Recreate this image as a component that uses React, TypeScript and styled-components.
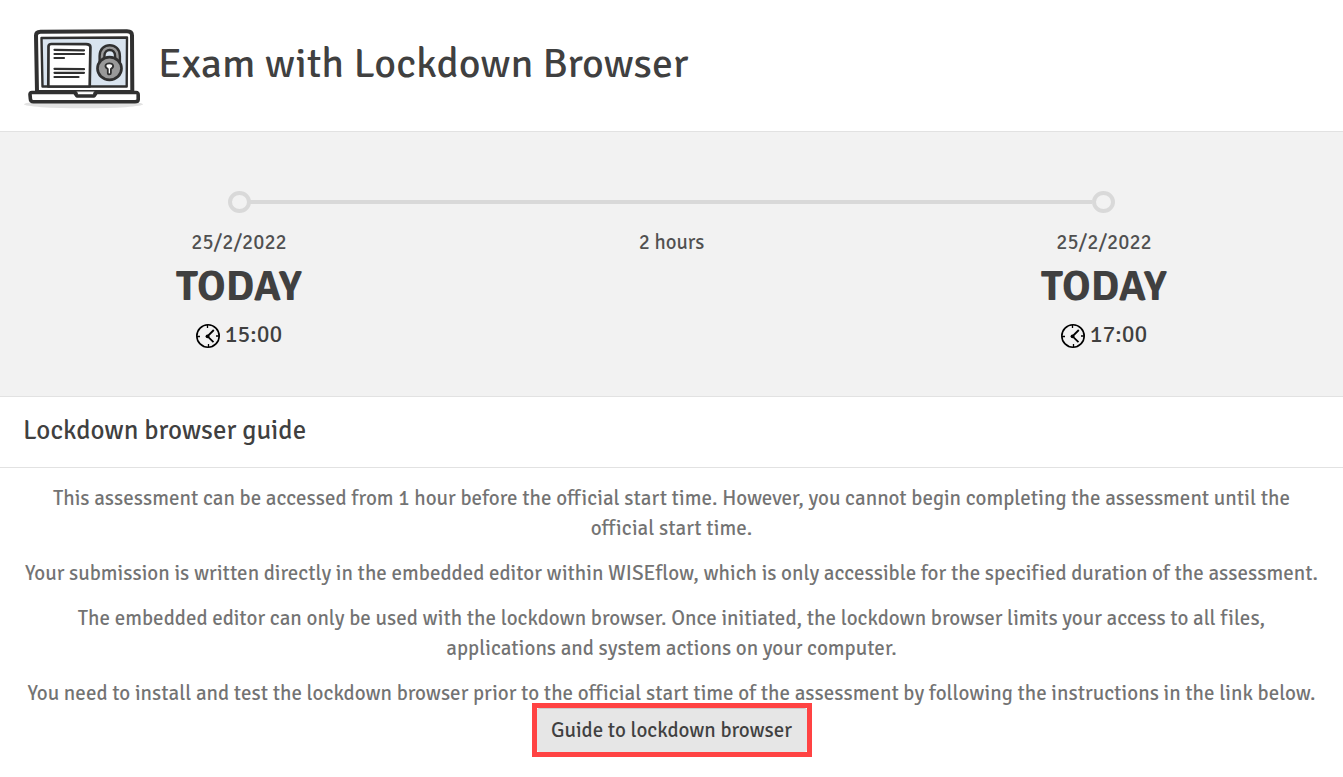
import styled, { createGlobalStyle } from 'styled-components';

interface MilestoneProps {
    date: string;
    label: string;
    time: string;
    end?: boolean;
}

const LaptopIcon = () => (
    <svg width="120" height="84" viewBox="0 0 120 84" fill="none" strokeLinejoin="round" strokeLinecap="round">
        <ellipse cx="60.5" cy="77.3" rx="59.5" ry="4" fill="#e2e2e2"/>
        <path d="M14 65 13 8.5Q13 5 17.5 4.8L104 4.2Q109 4.2 109 8.5L109.3 65Z" fill="#fff" stroke="#303030" strokeWidth="4"/>
        <path d="M18.5 11 104 10.5 103.7 59.5H19.5Z" fill="#d9e4ef" stroke="#303030" strokeWidth="2.4"/>
        <path d="M25.3 59.5 25.5 19.5Q25.5 17 28.5 17L63 17.2Q67.3 17.2 67.4 20L66.7 59.5Z" fill="#fff" stroke="#303030" strokeWidth="2.7"/>
        <path d="M31.5 22.8 61 23.3M31.5 27H61M31.5 31H41M31.5 41.8 61 42.2M31.5 45.8H61M31.5 50H55.5" stroke="#303030" strokeWidth="2.2"/>
        <path d="M79 35V29C79 17.8 94.5 17.8 94.5 29V35" stroke="#303030" strokeWidth="7.2" strokeLinecap="butt"/>
        <path d="M79 35V29C79 17.8 94.5 17.8 94.5 29V35" stroke="#999" strokeWidth="2.4" strokeLinecap="butt"/>
        <ellipse cx="86.5" cy="41.5" rx="12" ry="11.3" fill="#999" stroke="#303030" strokeWidth="2.7"/>
        <path d="M84.8 42C80.7 39.5 82.5 36.3 86.3 36.3C90 36.3 92 39.5 87.9 42V46Q87.900 47.3 86.3 47.3T84.8 46Z" fill="#fff" stroke="#303030" strokeWidth="1.8"/>
        <path d="M9 65.5H51.5L54 69H71L73.5 65.5H113Q115.3 65.5 115.2 68V72.5Q115 74.7 112 74.7H10.5Q7.5 74.7 7.4 72L7 67.5Q7 65.5 9 65.5Z" fill="#fff" stroke="#303030" strokeWidth="3.6"/>
        <path d="M54 64H71L70 67H55Z" fill="#fff"/>
        <path d="M54 64.6H71" stroke="#777" strokeWidth="1"/>
    </svg>
);

const ClockIcon = () => (
    <svg width="24" height="24" viewBox="0 0 24 24" fill="none" stroke="#000">
        <circle cx="12" cy="12" r="11.2" strokeWidth="1.6"/>
        <path d="M11.5 1V4M12.5 20V23M1 12.5H4M20 12H23" strokeWidth="1.3"/>
        <path d="M17.8 6 11.5 12.3 17.5 18.2" strokeWidth="1.8"/>
        <circle cx="11.5" cy="12.3" r="1.9" fill="#000" stroke="none"/>
    </svg>
);

const Milestone = ({date, label, time, end}: MilestoneProps) => (
    <Column>
        <Marker $end={end}/>
        <DateText>{date}</DateText>
        <DayLabel>{label}</DayLabel>
        <TimeRow>
            <ClockIcon/>
            <TimeText>{time}</TimeText>
        </TimeRow>
    </Column>
);

const App = () => (
    <>
        <GlobalStyle/>
        <Header>
            <LaptopIcon/>
            <Title>Exam with Lockdown Browser</Title>
        </Header>
        <Timeline>
            <Milestone date="25/2/2022" label="TODAY" time="15:00"/>
            <Duration>
                <Track/>
                <DateText>2 hours</DateText>
            </Duration>
            <Milestone date="25/2/2022" label="TODAY" time="17:00" end/>
        </Timeline>
        <GuideHeading>Lockdown browser guide</GuideHeading>
        <Guide>
            <Paragraph>
                <Line>This assessment can be accessed from 1 hour before the official start time. However, you cannot begin completing the assessment until the</Line>
                <Line>official start time.</Line>
            </Paragraph>
            <Paragraph>
                <Line>Your submission is written directly in the embedded editor within WISEflow, which is only accessible for the specified duration of the assessment.</Line>
            </Paragraph>
            <Paragraph>
                <Line>The embedded editor can only be used with the lockdown browser. Once initiated, the lockdown browser limits your access to all files,</Line>
                <Line>applications and system actions on your computer.</Line>
            </Paragraph>
            <Paragraph>
                <Line>You need to install and test the lockdown browser prior to the official start time of the assessment by following the instructions in the link below.</Line>
            </Paragraph>
            <Highlight>
                <GuideButton>Guide to lockdown browser</GuideButton>
            </Highlight>
        </Guide>
    </>
);

const GlobalStyle = createGlobalStyle`
    * {
        box-sizing: border-box;
    }
    body {
        margin: 0;
        background: #fff;
        color: #404040;
        font-family: "Signika Negative", "Noto Sans", sans-serif;
        font-size: 21px;
        overflow: hidden;
    }
`;

const Header = styled.header`
    display: flex;
    align-items: flex-start;
    height: 132px;
    padding: 27px 23px 0;
    border-bottom: 1px solid #e2e2e2;
`;

const Title = styled.h1`
    margin: 7px 0 0 15px;
    font-size: 42px;
    line-height: 60px;
    font-weight: 400;
    letter-spacing: 0.04px;
    white-space: nowrap;
`;

const Timeline = styled.section`
    display: grid;
    grid-template-columns: 200px 1fr 200px;
    height: 265px;
    padding: 59px 139px 0;
    background: #f2f2f2;
    border-bottom: 1px solid #e2e2e2;
`;

const Column = styled.div`
    display: flex;
    flex-direction: column;
    align-items: center;
`;

const Marker = styled.div<{ $end?: boolean }>`
    width: 23px;
    height: 22px;
    margin-right: ${({ $end }) => $end ? '1px' : '0'};
    border: 4px solid #d9d9d9;
    border-radius: 50%;
`;

const Duration = styled.div`
    display: flex;
    flex-direction: column;
    align-items: center;
`;

const Track = styled.div`
    align-self: stretch;
    height: 4px;
    margin: 9px -88px 9px -89px;
    background: #d9d9d9;
`;

const DateText = styled.div`
    margin-top: 15px;
    font-size: 20.7px;
    line-height: 30px;
    color: #505050;
`;

const DayLabel = styled.div`
    margin-top: 1px;
    font-size: 43px;
    line-height: 56px;
    font-weight: 700;
`;

const TimeRow = styled.div`
    display: flex;
    align-items: flex-start;
    gap: 5px;
    margin-top: 4px;
    height: 32px;

    & svg {
        margin-top: 5px;
    }
`;

const TimeText = styled.span`
    font-size: 23.7px;
    line-height: 32px;
`;

const GuideHeading = styled.h2`
    height: 71px;
    margin: 0;
    padding-left: 23px;
    border-bottom: 1px solid #e2e2e2;
    font-size: 27px;
    line-height: 68px;
    font-weight: 400;
`;

const Guide = styled.main`
    display: flex;
    flex-direction: column;
    align-items: center;
    padding-top: 15px;
    color: #737373;
`;

const Paragraph = styled.p`
    margin: 0 0 15px;
    line-height: 30px;
    text-align: center;
    letter-spacing: 0.02px;
    font-variant-ligatures: none;
`;

const Line = styled.span`
    display: block;
    white-space: nowrap;
`;

const Highlight = styled.div`
    width: 280px;
    height: 54px;
    margin-top: -20px;
    border: 5px solid #ff4343;
`;

const GuideButton = styled.button`
    width: 100%;
    height: 100%;
    padding: 0 0 2px;
    border: 0;
    border-top: 1px solid #ccc;
    border-radius: 3px;
    background: #e6e6e6;
    color: #404040;
    font: inherit;
    white-space: nowrap;
`;

export default App;
